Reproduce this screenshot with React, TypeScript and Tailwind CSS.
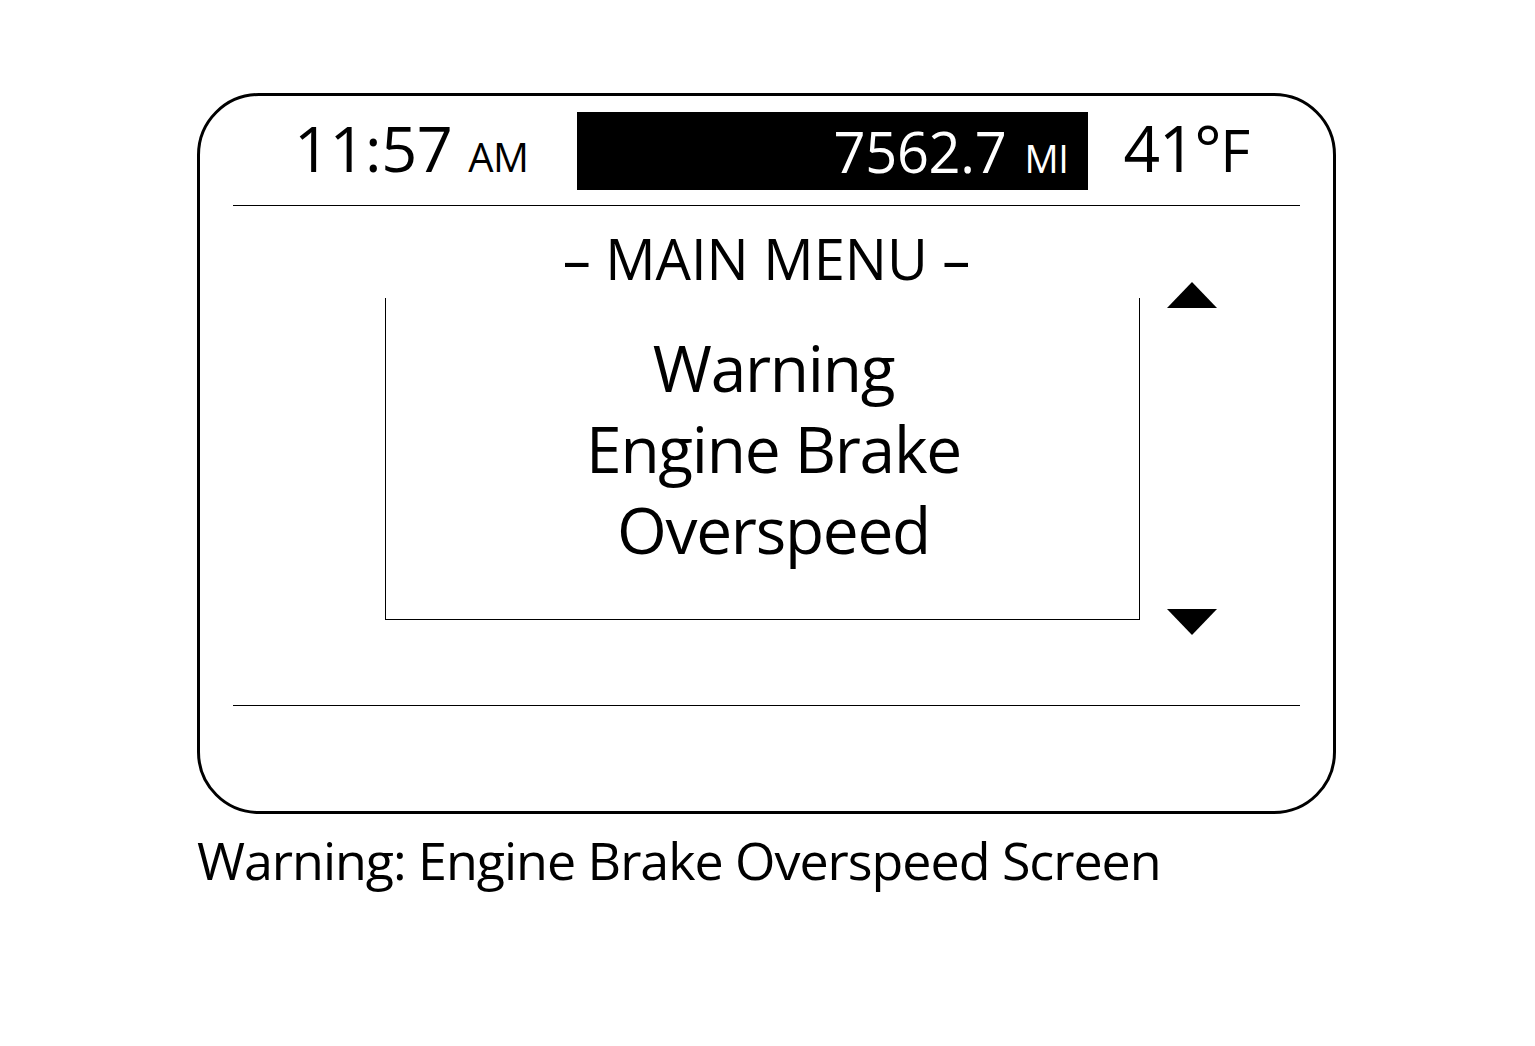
import React from 'react';

const font = { fontFamily: '"Open Sans", "Noto Sans", sans-serif' };

function Arrow({ dir }: { dir: 'up' | 'down' }) {
  return (
    <svg width="50" height="26" viewBox="0 0 50 26" className="block">
      {dir === 'up' ? <polygon points="25,0 50,26 0,26" fill="#000" /> : <polygon points="0,0 50,0 25,26" fill="#000" />}
    </svg>
  );
}

export default function App() {
  return (
    <div className="min-h-screen bg-white text-black pt-[93px] pl-[197px]" style={font}>
      <div className="w-[1139px] h-[721px] border-[3px] border-black rounded-[62px] flex flex-col">
        {/* top status bar */}
        <div className="mx-[33px] h-[110px] border-b border-black flex items-start">
          <div className="ml-[61px] mt-[20px] flex items-baseline tracking-[-0.03em]">
            <span className="text-[63px] leading-none">11:57</span>
            <span className="text-[40px] leading-none ml-[16px]">AM</span>
          </div>
          <div className="ml-[48px] mt-[16px] w-[511px] h-[78px] bg-black text-white flex items-center justify-end pr-[19px]">
            <div className="flex items-baseline tracking-[-0.02em]">
              <span className="text-[56px] leading-none">7562.7</span>
              <span className="text-[38px] leading-none ml-[18px]">MI</span>
            </div>
          </div>
          <div className="ml-[36px] mt-[20px] flex items-baseline">
            <span className="text-[64px] leading-none tracking-[-0.02em]">41°</span>
            <span className="text-[58px] leading-none">F</span>
          </div>
        </div>

        {/* menu area */}
        <div className="mx-[33px] h-[500px] border-b border-black flex flex-col">
          <div className="text-center text-[56px] leading-none mt-[24px]">– MAIN MENU –</div>
          <div className="flex mt-[12px]">
            <div className="ml-[152px] w-[755px] h-[322px] border-l border-r border-b border-black flex flex-col items-center justify-center pl-[22px] pb-[20px]">
              <div className="text-[64px] leading-[81px] text-center tracking-[-0.02em]">
                <div>Warning</div>
                <div>Engine Brake</div>
                <div>Overspeed</div>
              </div>
            </div>
            <div className="ml-[27px] flex flex-col justify-between h-[353px] -mt-[16px]">
              <Arrow dir="up" />
              <Arrow dir="down" />
            </div>
          </div>
        </div>
      </div>
      <div className="mt-[20px] text-[52px] leading-none tracking-[-0.02em]">Warning: Engine Brake Overspeed Screen</div>
    </div>
  );
}
